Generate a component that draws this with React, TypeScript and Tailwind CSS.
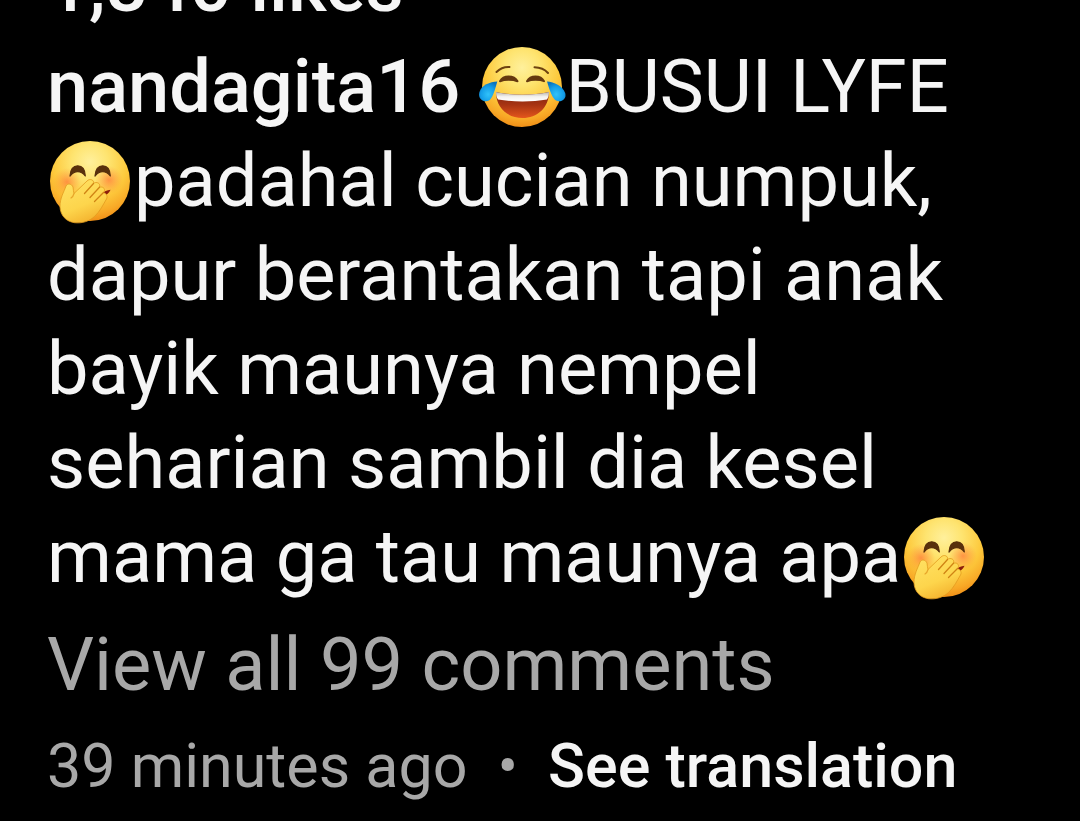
interface EmojiProps {
  id: string;
}

const emojiClasses = 'inline-block h-[88px] w-[87px] overflow-visible align-[-19px]';

// Face shading shared by both emojis
const FaceGradient = ({ id }: EmojiProps) => (
  <>
    <radialGradient id={`${id}-face`} cx="0.5" cy="0.26" r="0.76">
      <stop offset="0" stopColor="#fff09c" />
      <stop offset="0.3" stopColor="#fee470" />
      <stop offset="0.62" stopColor="#fdc93c" />
      <stop offset="0.85" stopColor="#f8a826" />
      <stop offset="1" stopColor="#ee8a14" />
    </radialGradient>
    <radialGradient id={`${id}-blush`}>
      <stop offset="0" stopColor="#ff6f38" stopOpacity="0.65" />
      <stop offset="1" stopColor="#ff8a3c" stopOpacity="0" />
    </radialGradient>
  </>
);

const JoyEmoji = ({ id }: EmojiProps) => (
  <svg className={emojiClasses} viewBox="1 0 87 88" role="img" aria-label="Face with tears of joy">
    <defs>
      <FaceGradient id={id} />
      <linearGradient id={`${id}-mouth`} x1="0" y1="0" x2="0" y2="1">
        <stop offset="0" stopColor="#7a2410" />
        <stop offset="0.5" stopColor="#a83412" />
        <stop offset="1" stopColor="#e4561c" />
      </linearGradient>
      <linearGradient id={`${id}-teeth`} x1="0" y1="0" x2="0" y2="1">
        <stop offset="0" stopColor="#b8b4ac" />
        <stop offset="0.5" stopColor="#f4f2ee" />
        <stop offset="1" stopColor="#ffffff" />
      </linearGradient>
      <radialGradient id={`${id}-tear`} cx="0.5" cy="0.65" r="0.65">
        <stop offset="0" stopColor="#30c2fa" />
        <stop offset="0.6" stopColor="#149ee8" />
        <stop offset="1" stopColor="#0a74be" />
      </radialGradient>
    </defs>
    <circle cx="44" cy="44" r="40" fill={`url(#${id}-face)`} />
    <path d="M18.5 29Q24 23.5 31.5 24M56.5 24.3Q65 24.5 70 30" fill="none" stroke="#6e4210" strokeWidth="2" strokeLinecap="round" />
    <path
      d="M22 38.2C24 34.5 27 33.5 30.5 33.5S37.5 34.5 39.5 38.2C36 36.8 33.5 36.8 30.5 36.8S25 37 22 38.2ZM49 38.2C51 34.5 54 33.5 57.5 33.5S64 34.5 66 38.2C63 36.8 60.5 36.8 57.5 36.8S52 37 49 38.2Z"
      fill="#66390f"
      stroke="#66390f"
      strokeWidth="2"
      strokeLinejoin="round"
    />
    <path d="M18 49C33 52.5 55 52.5 71 49C71 65 59 75 44.5 75S18 65 18 49Z" fill={`url(#${id}-mouth)`} />
    <path d="M18 49C33 52.5 55 52.5 71 49C71 52 70.5 54 69 56.5C54 59 35 59 20 56.5C18.5 54 18 52 18 49Z" fill={`url(#${id}-teeth)`} />
    <path d="M19.3 38.6C12 39 3.5 42 1.3 49.5C0 55 4 58.5 8.5 58.3C13.5 58 15.5 52 19.3 38.6Z" fill={`url(#${id}-tear)`} />
    <path d="M69 38.6C76 39 84.5 43 87.2 50C88.7 55 85 58.4 80.5 58.3C75.5 58 73 52 69 38.6Z" fill={`url(#${id}-tear)`} />
  </svg>
);

const GiggleEmoji = ({ id }: EmojiProps) => (
  <svg className={emojiClasses} viewBox="1 0 87 88" role="img" aria-label="Face with hand over mouth">
    <defs>
      <FaceGradient id={id} />
      <linearGradient id={`${id}-hand`} x1="0.2" y1="0" x2="0.65" y2="1">
        <stop offset="0" stopColor="#ffe163" />
        <stop offset="0.6" stopColor="#fdd54c" />
        <stop offset="1" stopColor="#f3b02c" />
      </linearGradient>
    </defs>
    <circle cx="44" cy="44" r="40" fill={`url(#${id}-face)`} />
    <circle cx="21" cy="45" r="14" fill={`url(#${id}-blush)`} />
    <circle cx="63" cy="43" r="14" fill={`url(#${id}-blush)`} />
    <path
      d="M24 39C24.5 32 27.5 28.8 31.7 28.8S39 32 39.3 39C37 36 34.5 34.7 31.7 34.7S26.5 36 24 39ZM49 39C49.5 32 52.5 28.8 56.7 28.8S64 32 64.3 39C62 36 59.5 34.7 56.7 34.7S51.5 36 49 39Z"
      fill="#58300c"
      stroke="#58300c"
      strokeWidth="1.2"
      strokeLinejoin="round"
    />
    <path d="M56 60C60 58.5 63.5 56 64.5 52.8C61 53 58 54.5 55.5 57Z" fill="#8c1f0c" />
    <path
      d="M20 49C21.5 46.2 25.5 46.5 27 50C27.6 52.5 27.2 54.5 28 56.5L41 44C44 41 48.5 43 47.5 46.5C50.5 44 55 46.5 53.5 50.2C57.5 49 60 52.5 57.5 55.5C60.5 56.5 62 59.5 60.5 62C57.5 67 54 74.5 48.5 79.5C43 84.5 36 86.5 28.5 85.7C20 84.5 14.5 78.5 14 70C13.8 61 18 55 20 49Z"
      fill={`url(#${id}-hand)`}
      stroke="#e29a1e"
      strokeWidth="0.8"
    />
    <path d="M47.5 46.5L38.5 56.5M53.5 50.2L44 60.5M57.5 55.5L48.5 64.5" fill="none" stroke="#d08414" strokeWidth="1.3" strokeLinecap="round" />
    <path d="M28 56.5C27.5 58.5 26.5 60 25 61" fill="none" stroke="#e8a62a" strokeWidth="1.2" strokeLinecap="round" />
  </svg>
);

const App = () => {
  return (
    <main className="flex min-h-screen flex-col overflow-hidden bg-black px-[47px] pb-4 font-['Roboto',sans-serif] text-[74px] leading-[94px] text-[#f5f5f5]">
      {/* the likes row is scrolled almost out of view */}
      <p className="-mt-[61px] mb-[7px] font-medium">1,840 likes</p>

      <p>
        <a href="#profile" className="font-medium">nandagita16</a>{' '}
        <JoyEmoji id="joy" />
        BUSUI LYFE <GiggleEmoji id="giggle-start" />
        padahal cucian numpuk, dapur berantakan tapi anak bayik maunya nempel seharian sambil dia kesel mama ga tau maunya apa
        <GiggleEmoji id="giggle-end" />
      </p>

      <button type="button" className="mt-[14px] self-start text-left text-[#a8a8a8]">
        View all 99 comments
      </button>

      <div className="mt-4 flex items-center text-[61px] leading-[76px]">
        <time className="text-[#a8a8a8]">39 minutes ago</time>
        <span className="mx-[30px] text-[#a8a8a8]">•</span>
        <button type="button" className="font-medium">See translation</button>
      </div>
    </main>
  );
};

export default App;
